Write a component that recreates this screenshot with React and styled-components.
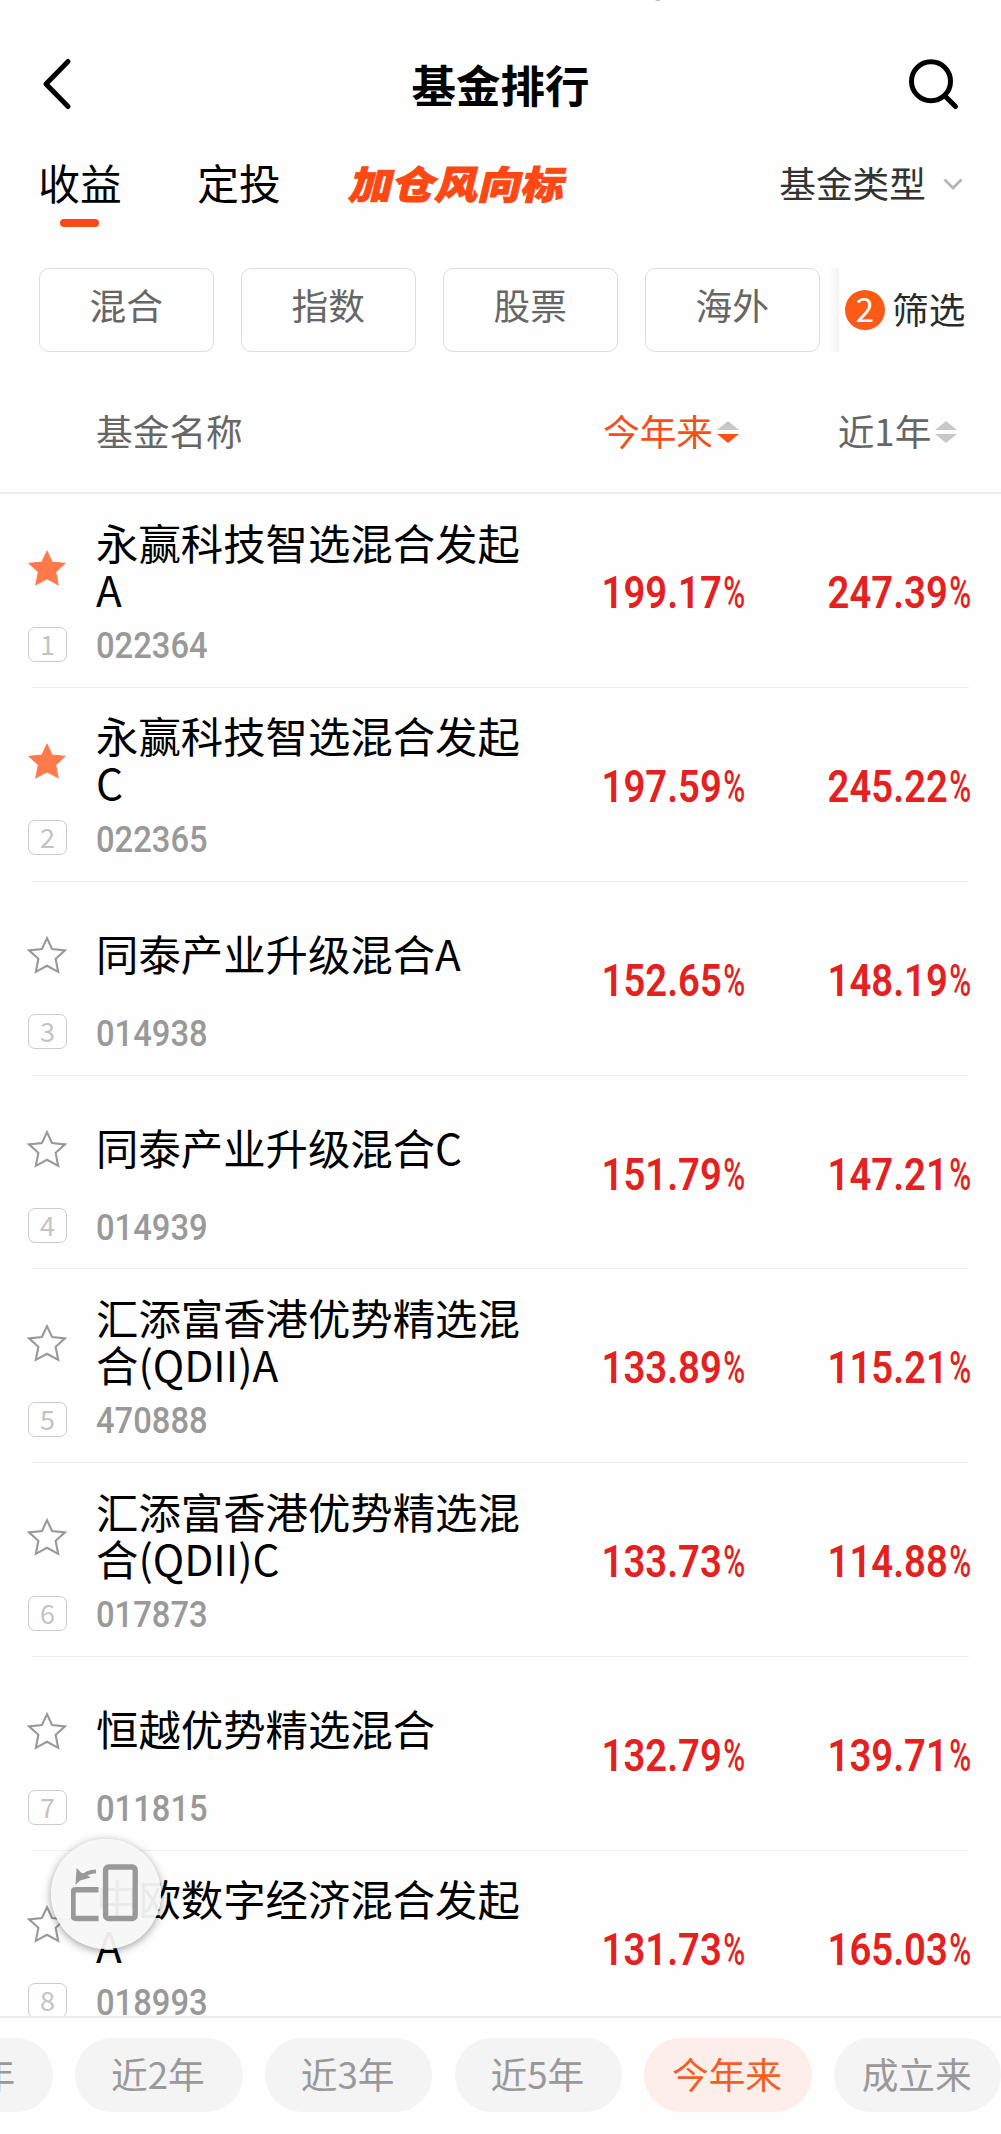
import React from 'react';
import styled, { createGlobalStyle } from 'styled-components';

const funds = [
  { name: '永赢科技智选混合发起A', code: '022364', ytd: '199.17', year: '247.39', starred: true },
  { name: '永赢科技智选混合发起C', code: '022365', ytd: '197.59', year: '245.22', starred: true },
  { name: '同泰产业升级混合A', code: '014938', ytd: '152.65', year: '148.19' },
  { name: '同泰产业升级混合C', code: '014939', ytd: '151.79', year: '147.21' },
  { name: '汇添富香港优势精选混合(QDII)A', code: '470888', ytd: '133.89', year: '115.21' },
  { name: '汇添富香港优势精选混合(QDII)C', code: '017873', ytd: '133.73', year: '114.88' },
  { name: '恒越优势精选混合', code: '011815', ytd: '132.79', year: '139.71' },
  { name: '中欧数字经济混合发起A', code: '018993', ytd: '131.73', year: '165.03' },
];

const categories = ['混合', '指数', '股票', '海外'];
const periods = ['近1年', '近2年', '近3年', '近5年', '今年来', '成立来'];

const Sort = ({ active }) => (
  <SortIcon viewBox="0 0 22 24">
    <path d="M11 1L22 10H0Z" fill="#c8c8c8" />
    <path d="M0 14H22L11 23Z" fill={active ? '#f9501c' : '#c8c8c8'} />
  </SortIcon>
);

const Star = ({ filled }) => (
  <StarIcon viewBox="0 0 38 38">
    <path
      d="M19 3L23.800 13.300L36 14.600L27.200 22.600L29.600 35L19 29.200L8.400 35L10.800 22.600L2 14.600L14.200 13.300Z"
      fill={filled ? '#ff7a4b' : 'none'}
      stroke={filled ? '#ff7a4b' : '#999'}
      strokeWidth={filled ? 1 : 2}
    />
  </StarIcon>
);

const Percent = ({ value }) => <Value><Digits>{value}<i>%</i></Digits></Value>;

const FundRow = ({ fund, rank }) => (
  <Row>
    <StarCell><Star filled={fund.starred} /></StarCell>
    <FundName>{fund.name}</FundName>
    <Rank>{rank}</Rank>
    <Code>{fund.code}</Code>
    <Percent value={fund.ytd} />
    <Percent value={fund.year} />
  </Row>
);

export default function App() {
  return <Page>
    <GlobalStyle />
    <CameraDot />
    <TitleBar>
      <svg width="34" height="56" viewBox="0 0 34 56">
        <path d="M28 5.500L6 28L28 50.500" fill="none" stroke="#000" strokeWidth="5" strokeLinecap="round" strokeLinejoin="round" />
      </svg>
      <h1>基金排行</h1>
      <svg width="56" height="56" viewBox="0 0 56 56">
        <g fill="none" stroke="#000" strokeWidth="5" strokeLinecap="round">
          <circle cx="26" cy="25.3" r="19.5" />
          <path d="M41 41L50.5 50.5" />
        </g>
      </svg>
    </TitleBar>
    <Tabs>
      <Tab $active>收益</Tab>
      <Tab>定投</Tab>
      <HotTab>加仓风向标</HotTab>
      <TypePicker>
        基金类型
        <svg width="20" height="12" viewBox="0 0 20 12">
          <path d="M1.500 1.500L10 10L18.500 1.500" fill="none" stroke="#b5b5b5" strokeWidth="2.8" />
        </svg>
      </TypePicker>
    </Tabs>
    <Filters>
      {categories.map(item => <Chip key={item}>{item}</Chip>)}
      <FilterButton>
        <Count>2</Count>
        <span>筛选</span>
      </FilterButton>
    </Filters>
    <TableHead>
      <span>基金名称</span>
      <HeadCell $active>今年来<Sort active /></HeadCell>
      <HeadCell>近1年<Sort /></HeadCell>
    </TableHead>
    <List>
      {funds.map((fund, i) => <FundRow key={fund.code} fund={fund} rank={i + 1} />)}
    </List>
    <PeriodBar>
      {periods.map(item => <Period key={item} $active={item === '今年来'}>{item}</Period>)}
    </PeriodBar>
    <RotateButton>
      <svg width="70" height="62" viewBox="0 0 70 62">
        <g fill="none" stroke="#999" strokeWidth="5.4">
          <rect x="34.6" y="4" width="29.600" height="51.500" rx="3" />
          <path d="M27.500 26.800H5Q2 26.800 2 29.800V52.500Q2 55.500 5 55.500H27.500" />
          <path d="M25 8.500Q16 8.500 10 15" strokeWidth="4.2" />
        </g>
        <path d="M5.500 5L10 9.500L20 14.500L9 17.500L4.500 22Z" fill="#999" />
      </svg>
    </RotateButton>
  </Page>;
}

const GlobalStyle = createGlobalStyle`
  * {
    box-sizing: border-box;
  }

  body {
    margin: 0;
    background-color: #fefefe;
    font-family: "Noto Sans CJK SC", sans-serif;
  }
`;

const Page = styled.div`
  position: relative;
  display: flex;
  flex-direction: column;
  width: 1001px;
  height: 2134px;
  overflow: hidden;
  background-color: #fefefe;
`;

const CameraDot = styled.div`
  position: absolute;
  top: -9px;
  left: 653px;
  width: 10px;
  height: 10px;
  border-radius: 50%;
  background-color: #bbb;
`;

const TitleBar = styled.header`
  flex: none;
  display: flex;
  align-items: center;
  justify-content: space-between;
  height: 112px;
  padding: 56px 40px 0;

  h1 {
    margin: 0 0 0 22px;
    font-size: 44.500px;
    line-height: 56px;
    font-weight: 700;
    color: #000;
  }
`;

const Tabs = styled.nav`
  flex: none;
  display: flex;
  height: 156px;
  padding: 42px 38px 0 38px;
  line-height: 56px;
`;

const Tab = styled.div`
  display: flex;
  flex-direction: column;
  align-items: center;
  width: 84px;
  margin-right: 75px;
  font-size: 41.700px;
  white-space: nowrap;
  color: #000;

  &::after {
    content: '';
    width: 39px;
    height: 8px;
    margin: 9px 1px 0 0;
    border-radius: 4px;
    background-color: ${({ $active }) => $active ? '#f9481a' : 'transparent'};
  }
`;

const HotTab = styled.div`
  width: 218px;
  font-size: 38.500px;
  font-weight: 900;
  color: #fc4812;
  white-space: nowrap;
  -webkit-text-stroke: 1px #fc4812;
  transform-origin: left center;
  transform: translateX(-11px) scaleX(1.115) skewX(-12deg);
`;

const TypePicker = styled.div`
  display: flex;
  align-items: center;
  gap: 17px;
  height: 56px;
  margin-left: auto;
  font-size: 36.700px;
  color: #333;

  svg {
    margin-top: 4px;
  }
`;

const Filters = styled.div`
  flex: none;
  display: flex;
  gap: 27.500px;
  height: 84px;
  padding-left: 39px;
`;

const Chip = styled.div`
  width: 174.500px;
  border: 1.500px solid #dedede;
  border-radius: 10px;
  font-size: 36.700px;
  line-height: 71px;
  text-align: center;
  color: #666;
`;

const FilterButton = styled.div`
  display: flex;
  align-items: center;
  gap: 7px;
  height: 84px;
  margin-left: -18px;
  font-size: 36.700px;
  color: #2b2b2b;

  &::before {
    content: '';
    align-self: stretch;
    width: 10px;
    margin-right: -1px;
    background: linear-gradient(to right, #fefefe, #f3f3f3);
  }

  span:last-child {
    margin-top: -4px;
  }
`;

const Count = styled.span`
  width: 40px;
  height: 40px;
  border-radius: 50%;
  background-color: #fc5b17;
  font-size: 33px;
  line-height: 36px;
  text-align: center;
  color: #fff;
`;

const TableHead = styled.div`
  flex: none;
  display: grid;
  grid-template-columns: 463px 226px 1fr;
  align-items: center;
  height: 142px;
  padding: 16px 0 0 96px;
  border-bottom: 2px solid #eee;
  font-size: 36.700px;
  color: #666;
`;

const HeadCell = styled.div`
  display: flex;
  align-items: center;
  justify-content: center;
  gap: 4px;
  margin-left: ${({ $active }) => $active ? '-2px' : '9px'};
  color: ${({ $active }) => $active ? '#f4501c' : '#666'};
`;

const SortIcon = styled.svg`
  width: 22px;
  height: 24px;
  margin-top: 3px;
`;

const List = styled.div`
  flex: none;
  height: 1522px;
  overflow: hidden;
`;

const Row = styled.div`
  display: grid;
  grid-template-columns: 64px 463px 226px 226px;
  grid-template-rows: 147px 10px;
  height: 193.850px;
  margin: 0 32px;
  border-bottom: 1.500px solid #f0f0f0;
`;

const StarCell = styled.div`
  display: flex;
  align-items: center;
  margin-left: -5px;
`;

const StarIcon = styled.svg`
  width: 40px;
  height: 40px;
`;

const FundName = styled.div`
  align-self: center;
  width: 432px;
  padding-bottom: 6px;
  font-size: 42.400px;
  line-height: 47px;
  word-break: break-all;
  color: #000;
`;

const Rank = styled.div`
  grid-row: 2;
  align-self: center;
  width: 39px;
  height: 35px;
  margin: -4px 0 0 -4px;
  border: 1.500px solid #ccc;
  border-radius: 7px;
  font-size: 27px;
  line-height: 31px;
  text-align: center;
  color: #c4c4c4;
`;

const Code = styled.div`
  grid-row: 2;
  grid-column: 2;
  align-self: center;
  font-family: Roboto, sans-serif;
  font-size: 37px;
  font-weight: 500;
  line-height: 40px;
  color: #999;
  transform: scaleX(0.885);
  transform-origin: left center;
`;

const Value = styled.div`
  grid-row: 1 / 3;
  height: 197px;
  display: flex;
  align-items: center;
  justify-content: center;
`;

const Digits = styled.span`
  margin-left: 2px;
  font-family: Roboto, sans-serif;
  font-size: 45px;
  font-weight: 600;
  color: #e3211f;
  transform: scaleX(0.85);

  i {
    display: inline-block;
    width: 25px;
    margin-left: 2px;
    font-style: normal;
    font-weight: 500;
    transform: scaleX(0.78);
    transform-origin: left center;
  }
`;

const PeriodBar = styled.footer`
  flex: none;
  display: flex;
  gap: 22.200px;
  height: 118px;
  padding-top: 20px;
  border-top: 2px solid #eee;
  margin-left: -114.500px;
`;

const Period = styled.div`
  flex: none;
  width: 167.500px;
  height: 74px;
  padding-right: 2px;
  border-radius: 37px;
  font-size: 36.700px;
  line-height: 70px;
  text-align: center;
  background-color: ${({ $active }) => $active ? '#feeee9' : '#f4f4f4'};
  color: ${({ $active }) => $active ? '#ef5f28' : '#999'};
`;

// Floats over the list, as the system rotation shortcut does
const RotateButton = styled.div`
  position: absolute;
  top: 1839px;
  left: 50.500px;
  display: flex;
  align-items: center;
  justify-content: center;
  width: 110px;
  height: 110px;
  border-radius: 50%;
  background-color: rgba(247, 247, 247, 0.95);
  box-shadow: 0 2px 9px rgba(0, 0, 0, 0.38);
`;
